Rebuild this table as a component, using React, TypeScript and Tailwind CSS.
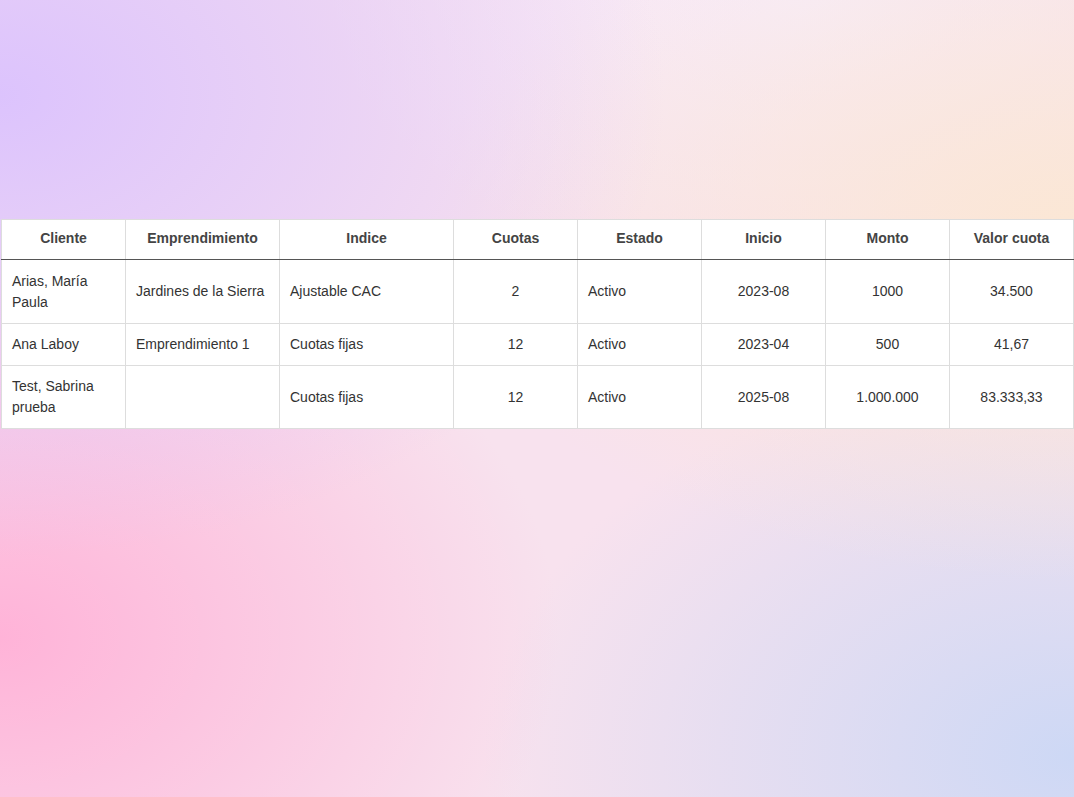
import React from "react";

type Row = {
  cliente: string[];
  emp: string;
  indice: string;
  cuotas: string;
  estado: string;
  inicio: string;
  monto: string;
  valor: string;
  h: string;
};

const rows: Row[] = [
  { cliente: ["Arias, María", "Paula"], emp: "Jardines de la Sierra", indice: "Ajustable CAC", cuotas: "2", estado: "Activo", inicio: "2023-08", monto: "1000", valor: "34.500", h: "h-[64px]" },
  { cliente: ["Ana Laboy"], emp: "Emprendimiento 1", indice: "Cuotas fijas", cuotas: "12", estado: "Activo", inicio: "2023-04", monto: "500", valor: "41,67", h: "" },
  { cliente: ["Test, Sabrina", "prueba"], emp: "", indice: "Cuotas fijas", cuotas: "12", estado: "Activo", inicio: "2025-08", monto: "1.000.000", valor: "83.333,33", h: "" },
];

const headers = ["Cliente", "Emprendimiento", "Indice", "Cuotas", "Estado", "Inicio", "Monto", "Valor cuota"];
const widths = ["w-[124px]", "w-[154px]", "w-[174px]", "w-[124px]", "w-[124px]", "w-[124px]", "w-[124px]", "w-[124px]"];

export default function App() {
  const td = "border border-[#dddddd] px-[10px] py-[10px] leading-[21px] align-middle";
  return (
    <div
      className="min-h-screen w-full pt-[219px] pl-[1px] bg-[#f8e2ee] bg-[radial-gradient(ellipse_62%_58%_at_0%_12%,#dcc3fd_0%,rgba(220,195,253,0)_100%),radial-gradient(ellipse_60%_45%_at_100%_28%,#fbe7d5_0%,rgba(251,231,213,0)_100%),radial-gradient(ellipse_52%_52%_at_0%_80%,#ffb3d8_0%,rgba(255,179,216,0)_100%),radial-gradient(ellipse_55%_50%_at_100%_95%,#cdd8f5_0%,rgba(205,216,245,0)_100%),radial-gradient(ellipse_45%_35%_at_75%_0%,#f7ecfb_0%,rgba(247,236,251,0)_100%)]"
      style={{ fontFamily: '"Liberation Sans", Arial, sans-serif' }}
    >
      <table className="w-[1073px] table-fixed border-collapse bg-white text-[14px] text-[#333333]">
        <colgroup>
          {widths.map((w, i) => (
            <col key={i} className={w} />
          ))}
        </colgroup>
        <thead>
          <tr>
            {headers.map((h) => (
              <th
                key={h}
                className="border border-[#dddddd] border-b-[#555555] px-[10px] pt-[9px] pb-[11px] leading-[19px] text-center font-bold text-[#444444]"
              >
                {h}
              </th>
            ))}
          </tr>
        </thead>
        <tbody>
          {rows.map((r, i) => (
            <tr key={i} className={r.h}>
              <td className={`${td} text-left`}>
                {r.cliente.map((c, j) => (
                  <div key={j}>{c}</div>
                ))}
              </td>
              <td className={`${td} text-left`}>{r.emp}</td>
              <td className={`${td} text-left`}>{r.indice}</td>
              <td className={`${td} text-center`}>{r.cuotas}</td>
              <td className={`${td} text-left`}>{r.estado}</td>
              <td className={`${td} text-center`}>{r.inicio}</td>
              <td className={`${td} text-center`}>{r.monto}</td>
              <td className={`${td} text-center`}>{r.valor}</td>
            </tr>
          ))}
        </tbody>
      </table>
    </div>
  );
}
